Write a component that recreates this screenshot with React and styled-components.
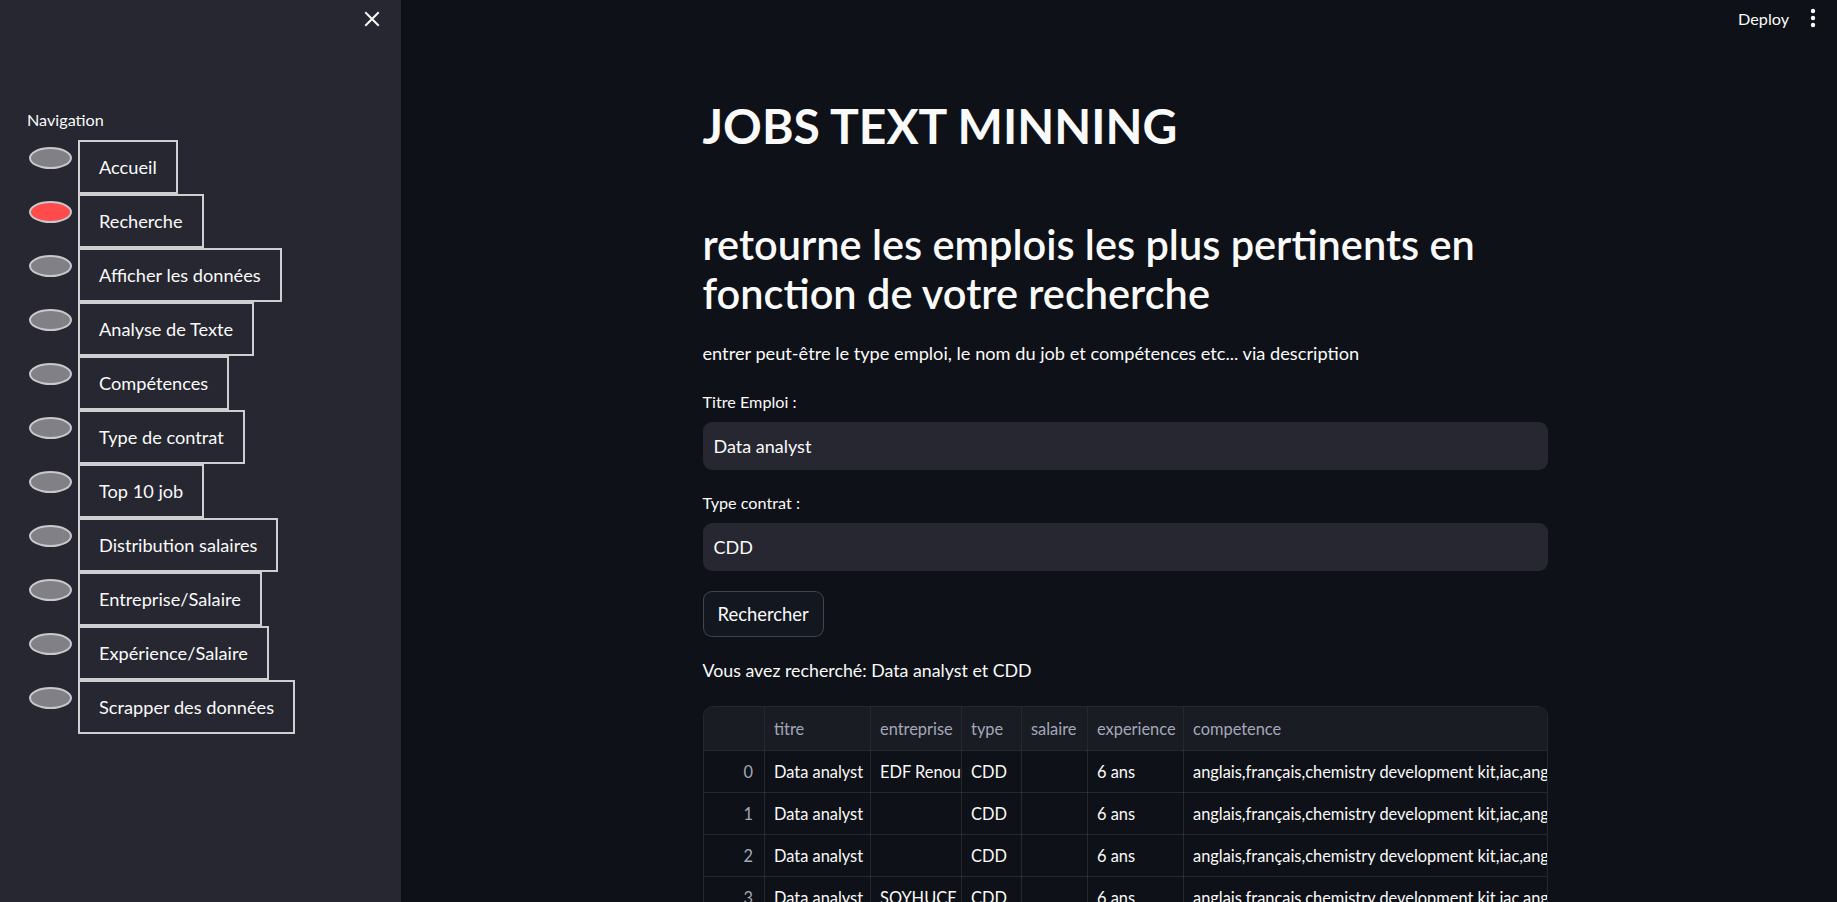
import React from "react"
import styled, { createGlobalStyle } from "styled-components"

const GlobalStyle = createGlobalStyle`
    html, body {
        margin: 0;
        padding: 0;
        background: #0e1117;
        overflow: hidden;
    }
    * {
        box-sizing: border-box;
    }
`

const pages = [
    "Accueil",
    "Recherche",
    "Afficher les données",
    "Analyse de Texte",
    "Compétences",
    "Type de contrat",
    "Top 10 job",
    "Distribution salaires",
    "Entreprise/Salaire",
    "Expérience/Salaire",
    "Scrapper des données",
]

const columns = [
    { key: "idx", label: "", width: 61 },
    { key: "titre", label: "titre", width: 106 },
    { key: "entreprise", label: "entreprise", width: 91 },
    { key: "type", label: "type", width: 60 },
    { key: "salaire", label: "salaire", width: 66 },
    { key: "experience", label: "experience", width: 96 },
    { key: "competence", label: "competence", width: 420 },
]

const skills = "anglais,français,chemistry development kit,iac,anglais,français,sql,python"
const companies = ["EDF Renouvelables", "", "", "SOYHUCE", "", "Capgemini", "", "", "", ""]
const rows = companies.map((c, i) => ({
    idx: i,
    titre: "Data analyst",
    entreprise: c,
    type: "CDD",
    salaire: "",
    experience: "6 ans",
    competence: skills,
}))

export default function App() {
    return (
        <Layout>
            <GlobalStyle />
            <Sidebar>
                <SidebarTop>
                    <CloseButton>
                        <svg width="16" height="16" viewBox="0 0 16 16">
                            <path d="M2 2 L14 14 M14 2 L2 14" stroke="#fafafa" strokeWidth="2" strokeLinecap="square" />
                        </svg>
                    </CloseButton>
                </SidebarTop>
                <NavLabel>Navigation</NavLabel>
                <RadioList>
                    {pages.map((p) => (
                        <RadioRow key={p}>
                            <RadioDot selected={p === "Recherche"} />
                            <RadioBox>{p}</RadioBox>
                        </RadioRow>
                    ))}
                </RadioList>
            </Sidebar>

            <Main>
                <Toolbar>
                    <DeployText>Deploy</DeployText>
                    <MenuButton>
                        <svg width="6" height="20" viewBox="0 0 6 20">
                            <circle cx="3" cy="3" r="2.2" fill="#fafafa" />
                            <circle cx="3" cy="10" r="2.2" fill="#fafafa" />
                            <circle cx="3" cy="17" r="2.2" fill="#fafafa" />
                        </svg>
                    </MenuButton>
                </Toolbar>

                <Block>
                    <Title>JOBS TEXT MINNING</Title>
                    <SubTitle>retourne les emplois les plus pertinents en fonction de votre recherche</SubTitle>
                    <Paragraph>entrer peut-être le type emploi, le nom du job et compétences etc... via description</Paragraph>

                    <FieldLabel>Titre Emploi :</FieldLabel>
                    <TextInput defaultValue="Data analyst" />

                    <FieldLabel second>Type contrat :</FieldLabel>
                    <TextInput defaultValue="CDD" />

                    <SearchButton>Rechercher</SearchButton>

                    <ResultText>Vous avez recherché: Data analyst et CDD</ResultText>

                    <TableWrap>
                        <Table>
                            <colgroup>
                                {columns.map((c) => (
                                    <col key={c.key} style={{ width: c.width }} />
                                ))}
                            </colgroup>
                            <thead>
                                <tr>
                                    {columns.map((c) => (
                                        <HeadCell key={c.key}>{c.label}</HeadCell>
                                    ))}
                                </tr>
                            </thead>
                            <tbody>
                                {rows.map((r) => (
                                    <tr key={r.idx}>
                                        {columns.map((c) => (
                                            <Cell key={c.key} index={c.key === "idx"}>{r[c.key]}</Cell>
                                        ))}
                                    </tr>
                                ))}
                            </tbody>
                        </Table>
                    </TableWrap>
                </Block>
            </Main>
        </Layout>
    )
}

const Layout = styled.div`
    display: flex;
    width: 100vw;
    height: 100vh;
    font-family: Lato, "Noto Sans", sans-serif;
    color: #fafafa;
    overflow: hidden;
`
const Sidebar = styled.aside`
    width: 401px;
    flex-shrink: 0;
    background-color: #262730;
    display: flex;
    flex-direction: column;
    padding: 0 0 0 29px;
`
const SidebarTop = styled.div`
    height: 38px;
    flex-shrink: 0;
    display: flex;
    justify-content: flex-end;
    align-items: center;
    padding-right: 21px;
`
const CloseButton = styled.div`
    width: 16px;
    height: 16px;
    display: flex;
`
const NavLabel = styled.div`
    margin-top: 71px;
    font-size: 16.2px;
    line-height: 22px;
    height: 22px;
    color: #fafafa;
    margin-left: -2px;
`
const RadioList = styled.div`
    margin-top: 9px;
    display: flex;
    flex-direction: column;
`
const RadioRow = styled.div`
    display: flex;
    align-items: flex-start;
    gap: 6px;
    height: 54px;
    flex-shrink: 0;
`
const RadioDot = styled.div`
    width: 43px;
    height: 22px;
    margin-top: 7px;
    border-radius: 50%;
    border: 2px solid #c9c9cc;
    background-color: ${({ selected }) => (selected ? "#ff4b4b" : "#808086")};
`
const RadioBox = styled.div`
    border: 2px solid #cfcfd1;
    height: 54px;
    padding: 0 19px;
    display: flex;
    align-items: center;
    font-size: 18.2px;
    white-space: nowrap;
    color: #fafafa;
    background-color: #262730;
`
const Main = styled.main`
    flex: 1;
    display: flex;
    flex-direction: column;
    align-items: center;
    background-color: #0e1117;
    overflow: hidden;
`
const Toolbar = styled.div`
    align-self: stretch;
    height: 36px;
    flex-shrink: 0;
    display: flex;
    justify-content: flex-end;
    align-items: center;
    padding-right: 21px;
    gap: 21px;
`
const DeployText = styled.span`
    font-size: 16.2px;
    color: #fafafa;
`
const MenuButton = styled.div`
    display: flex;
    width: 6px;
    height: 20px;
`
const Block = styled.div`
    width: 845px;
    flex-shrink: 0;
    margin-left: 12px;
    display: flex;
    flex-direction: column;
    align-items: flex-start;
`
const Title = styled.h1`
    margin: 58px 0 0;
    font-size: 48px;
    font-weight: 700;
    line-height: 64px;
`
const SubTitle = styled.h2`
    margin: 62px 0 0;
    font-size: 41.5px;
    font-weight: 600;
    line-height: 49px;
    width: 100%;
`
const Paragraph = styled.p`
    margin: 20px 0 0;
    font-size: 18.2px;
    line-height: 30px;
`
const FieldLabel = styled.label`
    margin-top: ${({ second }) => (second ? "20px" : "21px")};
    font-size: 16.2px;
    line-height: 26px;
`
const TextInput = styled.input`
    margin-top: 7px;
    width: 100%;
    height: 48px;
    flex-shrink: 0;
    border: none;
    border-radius: 9px;
    background-color: #262730;
    color: #fafafa;
    font-family: Lato, "Noto Sans", sans-serif;
    font-size: 18px;
    padding: 0 11px;
    outline: none;
`
const SearchButton = styled.button`
    margin-top: 20px;
    height: 46px;
    flex-shrink: 0;
    padding: 0 14px;
    border-radius: 9px;
    border: 1px solid rgba(250, 250, 250, 0.2);
    background-color: #131720;
    color: #fafafa;
    font-family: Lato, "Noto Sans", sans-serif;
    font-size: 18.4px;
`
const ResultText = styled.p`
    margin: 18px 0 0;
    font-size: 17.8px;
    line-height: 30px;
`
const TableWrap = styled.div`
    margin-top: 21px;
    width: 100%;
    flex-shrink: 0;
    border: 1px solid rgba(250, 250, 250, 0.1);
    border-radius: 10px;
    overflow: hidden;
`
const Table = styled.table`
    width: 100%;
    table-layout: fixed;
    border-collapse: collapse;
    font-size: 16.4px;
`
const HeadCell = styled.th`
    height: 43px;
    background-color: #1a1c24;
    color: #a3a8b8;
    font-weight: 400;
    text-align: left;
    padding: 0 9px;
    border-right: 1px solid rgba(250, 250, 250, 0.1);
    border-bottom: 1px solid rgba(250, 250, 250, 0.1);
    white-space: nowrap;
    overflow: hidden;
`
const Cell = styled.td`
    height: 42px;
    padding: 0 ${({ index }) => (index ? "11px" : "9px")};
    text-align: ${({ index }) => (index ? "right" : "left")};
    color: ${({ index }) => (index ? "#a3a8b8" : "#fafafa")};
    border-right: 1px solid rgba(250, 250, 250, 0.1);
    border-bottom: 1px solid rgba(250, 250, 250, 0.1);
    white-space: nowrap;
    overflow: hidden;
`
